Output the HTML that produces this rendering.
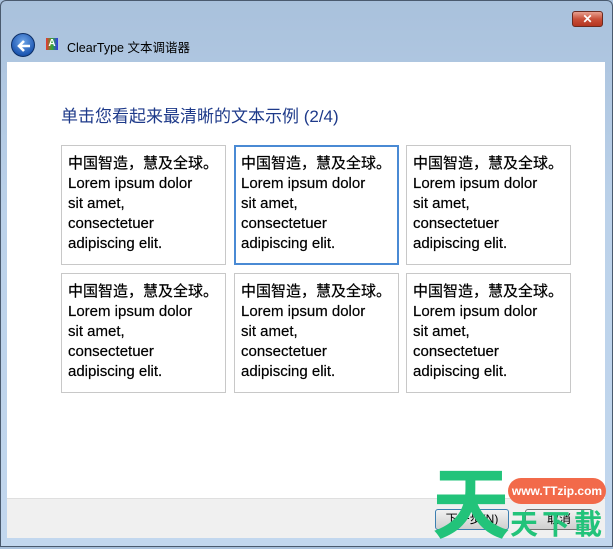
<!DOCTYPE html>
<html><head><meta charset="utf-8"><style>
*{margin:0;padding:0;box-sizing:border-box}
body{width:613px;height:547px;overflow:hidden;position:relative;background:linear-gradient(#a9c1dc,#bcd2ea 40%,#c2d7ee);font-family:"Liberation Sans","Noto Sans CJK SC",sans-serif}
.frame{position:absolute;inset:0;border:1px solid #4a5a6e;border-radius:6px 6px 0 0}
.close{position:absolute;left:572px;top:11px;width:31px;height:16px;border:1px solid #6b2a20;border-radius:3px;background:linear-gradient(#e8a090,#c9503a 50%,#b43520);color:#fff;font-size:12px;font-weight:bold;text-align:center;line-height:14px}
.back{position:absolute;left:11px;top:33px;width:24px;height:24px;border-radius:50%;background:radial-gradient(circle at 50% 35%,#6fa6e8,#1f59b4 70%,#133f86);border:1px solid #0d2f66}
.back svg{position:absolute;left:3px;top:3px}
.ico{position:absolute;left:46px;top:38px;width:12px;height:12px;background:linear-gradient(90deg,#e33,#3a3 50%,#33e);color:#fff;font-size:10px;text-align:center;line-height:12px;font-weight:bold}
.title{position:absolute;left:67px;top:37px;font-size:12.5px;color:#000}
.content{position:absolute;left:7px;top:62px;width:598px;height:436px;background:#fff}
.bottom{position:absolute;left:7px;top:498px;width:598px;height:40px;background:#f0f0f0;border-top:1px solid #dfdfdf}
h1{position:absolute;left:61px;top:102px;font-size:17px;font-weight:normal;color:#1e3a8a}
.cell{position:absolute;width:165px;height:120px;border:1px solid #c8c8c8;padding:8px 0 0 6px;font-size:15px;line-height:20px;color:#000;-webkit-text-stroke:0.2px #000}
.sel{border:2px solid #4a8ad4;padding:7px 0 0 5px}
.btn{position:absolute;top:509px;height:21px;border:1px solid #707070;border-radius:3px;background:linear-gradient(#f2f2f2,#e0e0e0 50%,#cfcfcf);font-size:12px;text-align:center;line-height:19px}
</style></head><body>
<div class="frame"></div>
<div class="close">✕</div>
<div class="back"><svg width="18" height="18" viewBox="0 0 18 18"><path d="M15 9H5M9 4L4 9l5 5" stroke="#fff" stroke-width="2.6" fill="none"/></svg></div>
<div class="ico">A</div>
<div class="title">ClearType 文本调谐器</div>
<div class="content"></div>
<div class="bottom"></div>
<h1>单击您看起来最清晰的文本示例 (2/4)</h1>
<div class="cell" style="left:61px;top:145px">中国智造，慧及全球。<br>Lorem ipsum dolor<br>sit amet,<br>consectetuer<br>adipiscing elit.</div>
<div class="cell sel" style="left:234px;top:145px">中国智造，慧及全球。<br>Lorem ipsum dolor<br>sit amet,<br>consectetuer<br>adipiscing elit.</div>
<div class="cell" style="left:406px;top:145px">中国智造，慧及全球。<br>Lorem ipsum dolor<br>sit amet,<br>consectetuer<br>adipiscing elit.</div>
<div class="cell" style="left:61px;top:273px">中国智造，慧及全球。<br>Lorem ipsum dolor<br>sit amet,<br>consectetuer<br>adipiscing elit.</div>
<div class="cell" style="left:234px;top:273px">中国智造，慧及全球。<br>Lorem ipsum dolor<br>sit amet,<br>consectetuer<br>adipiscing elit.</div>
<div class="cell" style="left:406px;top:273px">中国智造，慧及全球。<br>Lorem ipsum dolor<br>sit amet,<br>consectetuer<br>adipiscing elit.</div>
<div class="btn" style="left:435px;width:74px;border-color:#3c7fb1">下一步(N)</div>
<div class="btn" style="left:525px;width:68px">取消</div>
<div style="position:absolute;left:508px;top:478px;width:98px;height:26px;border-radius:13px;background:#f26a4a;color:#fff;font-size:12px;font-weight:bold;text-align:center;line-height:26px">www.TTzip.com</div>
<div style="position:absolute;left:432px;top:462px;font-size:78px;line-height:86px;font-weight:bold;color:#22c37a">天</div>
<div style="position:absolute;left:510px;top:508px;font-size:28px;line-height:34px;font-weight:bold;color:#22c37a;letter-spacing:4px">天下載</div>
</body></html>
